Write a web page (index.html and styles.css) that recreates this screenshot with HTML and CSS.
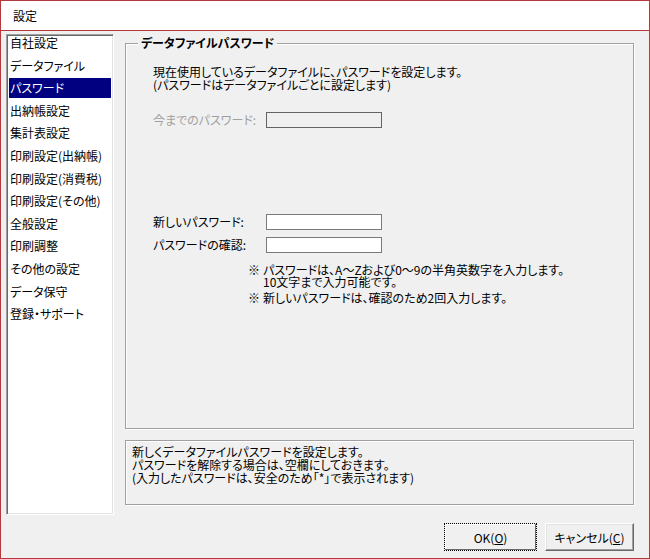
FILE: index.html
```html
<!DOCTYPE html>
<html lang="ja">
<head>
<meta charset="utf-8">
<title>設定</title>
<link rel="stylesheet" href="styles.css">
</head>
<body>
<div class="window">
  <div class="titlebar">設定</div>
  <div class="client">
    <div class="main">
      <ul class="nav">
        <li>自社設定</li>
        <li>データファイル</li>
        <li class="selected"><span>パスワード</span></li>
        <li>出納帳設定</li>
        <li>集計表設定</li>
        <li>印刷設定(出納帳)</li>
        <li>印刷設定(消費税)</li>
        <li>印刷設定(その他)</li>
        <li>全般設定</li>
        <li>印刷調整</li>
        <li>その他の設定</li>
        <li>データ保守</li>
        <li>登録・サポート</li>
      </ul>
      <div class="content">
        <div class="group">
          <div class="group-title">データファイルパスワード</div>
          <p class="intro">現在使用しているデータファイルに、パスワードを設定します。<br>(パスワードはデータファイルごとに設定します)</p>
          <div class="row row-old disabled">
            <span class="label">今までのパスワード:</span>
            <span class="input"></span>
          </div>
          <div class="row row-new">
            <span class="label">新しいパスワード:</span>
            <span class="input"></span>
          </div>
          <div class="row row-confirm">
            <span class="label">パスワードの確認:</span>
            <span class="input"></span>
          </div>
          <div class="notes">
            <p class="note"><span class="mark">※</span><span>パスワードは、A～Zおよび0～9の半角英数字を入力します。<br>10文字まで入力可能です。</span></p>
            <p class="note note-2"><span class="mark">※</span><span>新しいパスワードは、確認のため2回入力します。</span></p>
          </div>
        </div>
        <div class="desc">新しくデータファイルパスワードを設定します。<br>パスワードを解除する場合は、空欄にしておきます。<br>(入力したパスワードは、安全のため「*」で表示されます)</div>
      </div>
    </div>
    <div class="footer">
      <button class="btn btn-default">OK(<u>O</u>)</button>
      <button class="btn btn-cancel">キャンセル(<u>C</u>)</button>
    </div>
  </div>
</div>
</body>
</html>
```

FILE: styles.css
```css
* { box-sizing: border-box; }
html, body { margin: 0; padding: 0; background: #ffffff; }
body {
  font-family: "Noto Sans CJK JP", "Noto Sans", sans-serif;
  font-size: 12px;
  font-feature-settings: "palt";
  color: #000;
}
p { margin: 0; }

.window {
  width: 650px;
  height: 559px;
  border: 1px solid #b3393c;
  display: flex;
  flex-direction: column;
  background: #f0f0f0;
}
.titlebar {
  height: 30px;
  flex: none;
  background: #fff;
  border-bottom: 1px solid #b3393c;
  padding-left: 12px;
  line-height: 29px;
  font-size: 12px;
}
.client {
  flex: 1;
  display: flex;
  flex-direction: column;
  padding: 3px 0 0 5px;
}
.main {
  display: flex;
  gap: 11px;
  height: 481px;
}
.nav {
  list-style: none;
  margin: 0;
  width: 108px;
  height: 481px;
  background: #fff;
  border-top: 1px solid #a0a0a0;
  border-left: 1px solid #a0a0a0;
  border-right: 1px solid #fff;
  border-bottom: 1px solid #fff;
  box-shadow: inset 1px 1px 0 #696969, inset -1px -1px 0 #e3e3e3;
  padding: 1px 2px 0 2px;
}
.nav li {
  height: 22.6px;
  line-height: 14px;
  padding: 0 0 0 1px;
  white-space: nowrap;
}
.nav li.selected span {
  display: block;
  position: relative;
  top: -3px;
  height: 20px;
  line-height: 20px;
  background: #000080;
  color: #fff;
  margin-left: -1px;
  padding-left: 1px;
}

.content {
  flex: 1;
  display: flex;
  flex-direction: column;
  padding-top: 9px;
  padding-right: 15px;
}
.group {
  position: relative;
  height: 386px;
  border: 1px solid #a0a0a0;
  box-shadow: inset 1px 1px 0 #fff, 1px 1px 0 #fff;
  padding: 0 0 0 27px;
}
.group-title {
  position: absolute;
  top: -8px;
  left: 12px;
  padding: 0 3px;
  background: #f0f0f0;
  font-weight: bold;
  line-height: 14px;
}
.intro {
  margin-top: 21px;
  line-height: 13px;
}
.row {
  display: flex;
  align-items: center;
}
.label {
  width: 113px;
  line-height: 14px;
  white-space: nowrap;
}
.input {
  width: 116px;
  height: 16px;
  background: #fff;
  border: 1px solid #7a7a7a;
}
.row-old { margin-top: 21px; }
.disabled .label { color: #a0a0a0; }
.disabled .input { background: #f0f0f0; border-color: #646464; }
.row-new { margin-top: 86px; }
.row-confirm { margin-top: 7px; }
.notes {
  margin-top: 11px;
  padding-left: 95px;
}
.note {
  display: flex;
  line-height: 12px;
}
.note .mark { width: 15px; flex: none; }
.note-2 { margin-top: 4px; }

.desc {
  margin-top: 11px;
  height: 65px;
  border: 1px solid #a0a0a0;
  box-shadow: inset 1px 1px 0 #fff, 1px 1px 0 #fff;
  padding: 4px 0 0 6px;
  line-height: 13px;
}

.footer {
  flex: 1;
  display: flex;
  justify-content: flex-end;
  align-items: flex-start;
  gap: 8px;
  padding: 8px 15px 0 0;
}
.btn {
  font-family: inherit;
  font-size: 12px;
  font-feature-settings: "palt";
  height: 28px;
  background: #f0f0f0;
  border: 1px solid;
  border-color: #fff #696969 #696969 #fff;
  box-shadow: inset -1px -1px 0 #a0a0a0, inset 1px 1px 0 #e3e3e3;
  padding: 0;
  color: #000;
}
.btn-default {
  width: 93px;
  border: 1px dotted #000;
  box-shadow: inset -1px -1px 0 #696969, inset 1px 1px 0 #fff;
}
.btn-cancel { width: 89px; }
```
